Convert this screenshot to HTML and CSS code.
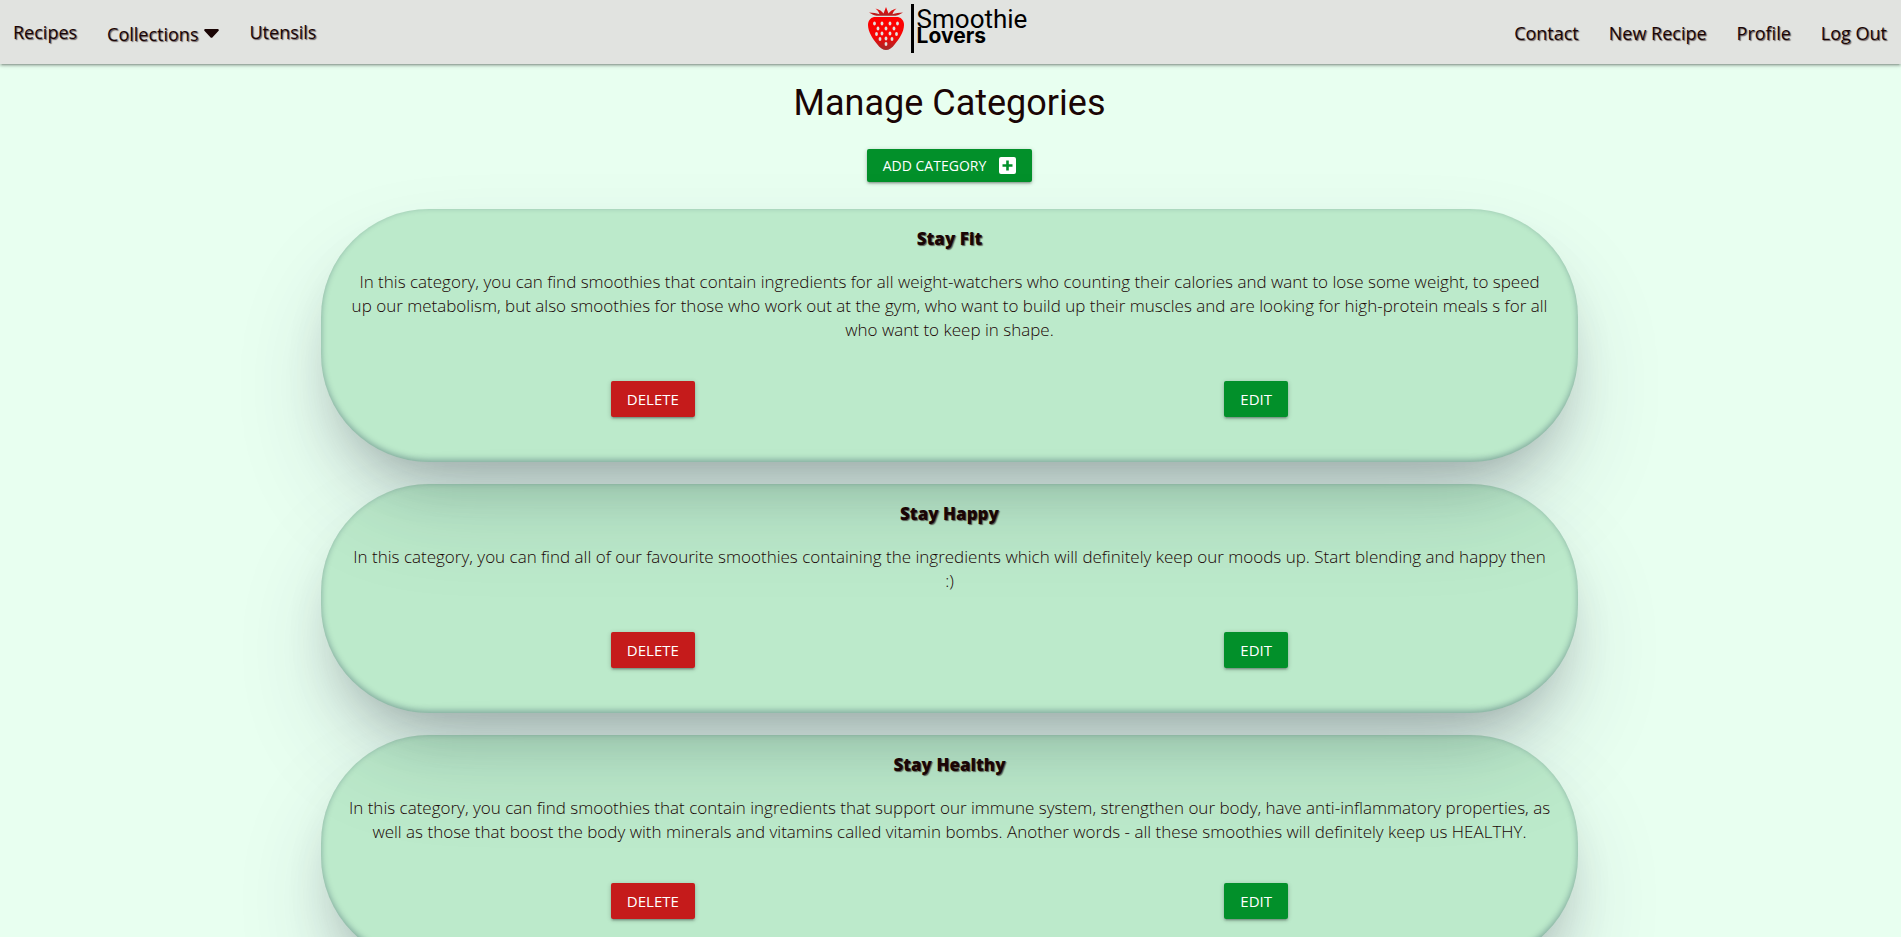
FILE: index.html
```html
<!DOCTYPE html>
<html lang="en">
<head>
<meta charset="utf-8">
<title>Manage Categories</title>
<link rel="stylesheet" href="styles.css">
</head>
<body>
<header class="navbar">
  <nav class="nav-group">
    <a href="#">Recipes</a>
    <a href="#" class="has-caret">Collections
      <svg class="caret" viewBox="0 0 15 9" aria-hidden="true"><path d="M1.5 0h12c1.200 0 1.700 1.200.9 2L8.600 8.200c-.6.7-1.600.7-2.200 0L.6 2C-.2 1.200.3 0 1.500 0z"/></svg>
    </a>
    <a href="#">Utensils</a>
  </nav>
  <a href="#" class="logo">
    <svg class="berry" viewBox="0 0 36 43" aria-hidden="true">
      <defs>
        <linearGradient id="flesh" x1="0" y1="0" x2="0" y2="1"><stop offset="0" stop-color="#f00"/><stop offset=".6" stop-color="#f60606"/><stop offset="1" stop-color="#a32a2a"/></linearGradient>
        <linearGradient id="leaf" x1="0" y1="0" x2="0" y2="1"><stop offset="0" stop-color="#f00"/><stop offset="1" stop-color="#b02020"/></linearGradient>
      </defs>
      <path fill="url(#leaf)" d="M1 5.500C5 6 8 6 11.500 7.200C10.800 5 10 3.500 7.500 1.500C11.500 2.500 14 4.200 15.500 6.500L18 0L20.500 6.500C22 4.200 24.500 2.500 28.500 1.500C26 3.500 25.200 5 24.500 7.200C28 6 31 6 35 5.500C32.500 7 30.500 8.500 27.500 8.700H8.500C5.500 8.500 3.500 7 1 5.500z"/>
      <path fill="url(#flesh)" d="M6 10H30C34 11 36 14 36 18C36 25 31 32 27 37C24 41 21 43 18 43S12 41 9 37C5 32 0 25 0 18C0 14 2 11 6 10z"/>
      <g fill="#e1e3e0"><ellipse cx="6.500" cy="16.500" rx="1.400" ry="2"/><ellipse cx="14" cy="16.500" rx="1.400" ry="2"/><ellipse cx="22" cy="16.500" rx="1.400" ry="2"/><ellipse cx="29.500" cy="16.500" rx="1.400" ry="2"/><ellipse cx="10" cy="21.500" rx="1.400" ry="2"/><ellipse cx="18" cy="21.500" rx="1.400" ry="2"/><ellipse cx="26" cy="21.500" rx="1.400" ry="2"/><ellipse cx="8.500" cy="27" rx="1.400" ry="2"/><ellipse cx="14" cy="26.500" rx="1.400" ry="2"/><ellipse cx="22" cy="26.500" rx="1.400" ry="2"/><ellipse cx="28.500" cy="27" rx="1.400" ry="2"/><ellipse cx="12" cy="32" rx="1.400" ry="2"/><ellipse cx="18" cy="31.500" rx="1.400" ry="2"/><ellipse cx="24" cy="32" rx="1.400" ry="2"/><ellipse cx="18" cy="37" rx="1.400" ry="2"/></g>
    </svg>
    <span class="logo-bar"></span>
    <span class="logo-text"><span class="logo-top">Smoothie</span><span class="logo-bottom">Lovers</span></span>
  </a>
  <nav class="nav-group nav-right">
    <a href="#">Contact</a>
    <a href="#">New Recipe</a>
    <a href="#">Profile</a>
    <a href="#">Log Out</a>
  </nav>
</header>
<main class="container">
  <h1>Manage Categories</h1>
  <a href="#" class="btn btn-add">Add Category
    <svg viewBox="0 0 17 17" class="plus" aria-hidden="true"><path fill="#fff" fill-rule="evenodd" d="M2 0h13a2 2 0 0 1 2 2v13a2 2 0 0 1-2 2H2a2 2 0 0 1-2-2V2a2 2 0 0 1 2-2zm5.200 3.500v3.700H3.500v2.600h3.700v3.700h2.600V9.800h3.700V7.200H9.800V3.500z"/></svg>
  </a>
  <section class="card">
    <h2>Stay Fit</h2>
    <p>In this category, you can find smoothies that contain ingredients for all weight-watchers who counting their calories and want to lose some weight, to speed up our metabolism, but also smoothies for those who work out at the gym, who want to build up their muscles and are looking for high-protein meals s for all who want to keep in shape.</p>
    <div class="actions"><div><button type="button" class="btn btn-delete">Delete</button></div><div><a href="#" class="btn">Edit</a></div></div>
  </section>
  <section class="card">
    <h2>Stay Happy</h2>
    <p>In this category, you can find all of our favourite smoothies containing the ingredients which will definitely keep our moods up. Start blending and happy then :)</p>
    <div class="actions"><div><button type="button" class="btn btn-delete">Delete</button></div><div><a href="#" class="btn">Edit</a></div></div>
  </section>
  <section class="card">
    <h2>Stay Healthy</h2>
    <p>In this category, you can find smoothies that contain ingredients that support our immune system, strengthen our body, have anti-inflammatory properties, as well as those that boost the body with minerals and vitamins called vitamin bombs. Another words - all these smoothies will definitely keep us HEALTHY.</p>
    <div class="actions"><div><button type="button" class="btn btn-delete">Delete</button></div><div><a href="#" class="btn">Edit</a></div></div>
  </section>
</main>
</body>
</html>
```
FILE: styles.css
```css
* { box-sizing: border-box; }
html { overflow: hidden; height: 100%; }
body {
  margin: 0;
  height: 100%;
  overflow: hidden;
  background: #e8fff0;
  color: #1a0505;
  font-family: "Open Sans", "Noto Sans", sans-serif;
  font-size: 17px;
  line-height: 24px;
}
a { color: inherit; text-decoration: none; }

.navbar {
  display: grid;
  grid-template-columns: 1fr auto 1fr;
  align-items: center;
  height: 64px;
  background: #e1e3e0;
  box-shadow: 0 2px 2px 0 rgba(0,0,0,.14), 0 3px 1px -2px rgba(0,0,0,.12), 0 1px 5px 0 rgba(0,0,0,.2);
}
.nav-group {
  display: flex;
  gap: 30px;
  padding: 2px 14px 0 13px;
  font-size: 18px;
  text-shadow: 1px 1px 1px rgba(26,5,5,.6);
}
.nav-right { justify-content: flex-end; padding-top: 1px; }
.has-caret { display: flex; gap: 6px; padding-top: 2px; }
.caret { width: 15px; height: 9px; margin-top: 7px; fill: #1a0505; }

.logo { display: flex; padding: 0 6px 7px 0; color: #000; }
.berry { width: 36px; height: 43px; margin-top: 3px; }
.logo-bar { width: 3px; height: 49px; margin: 0 3px 0 7px; background: #000; }
.logo-text { display: flex; flex-direction: column; font-family: Roboto, sans-serif; }
.logo-top { padding-top: 5px; font-size: 26px; line-height: 20px; }
.logo-bottom { font-family: Inter, sans-serif; font-size: 21px; font-weight: 700; line-height: 14px; }

.container { width: 70%; margin: 0 auto; padding: 0 38px 0 36px; text-align: center; }
h1 {
  margin: 19px 0 26px;
  font-family: Roboto, sans-serif;
  font-size: 36px;
  font-weight: 400;
  line-height: 40px;
}
.btn {
  display: inline-block;
  padding: 0 16px;
  border: 0;
  border-radius: 2px;
  background: #02902a;
  box-shadow: 0 2px 2px 0 rgba(0,0,0,.14), 0 3px 1px -2px rgba(0,0,0,.12), 0 1px 5px 0 rgba(0,0,0,.2);
  color: #fff;
  font-family: inherit;
  font-size: 15px;
  line-height: 36px;
  text-transform: uppercase;
}
.btn-delete { background: #c51b1b; }
.btn-add { display: flex; align-items: center; gap: 13px; width: fit-content; margin: 0 auto 27px; font-size: 14px; line-height: 33px; }
.plus { width: 17px; height: 17px; }

.card {
  margin-bottom: 22px;
  padding: 18px 20px 45px;
  border-radius: 108px;
  background: rgba(2,144,42,.19);
  box-shadow: rgba(50,50,93,.25) 0 50px 100px -20px, rgba(0,0,0,.3) 0 30px 60px -30px, rgba(10,37,64,.35) 0 -2px 6px 0 inset;
}
h2 {
  margin: 0 0 19px;
  font-size: 17px;
  font-weight: 800;
  line-height: 24px;
  text-shadow: 1px 1px 1px rgba(26,5,5,.6);
}
.card p { margin: 0 0 39px; padding: 0 7px; font-weight: 300; }
.actions { display: grid; grid-template-columns: 1fr 1fr; padding-left: 10px; }
```
